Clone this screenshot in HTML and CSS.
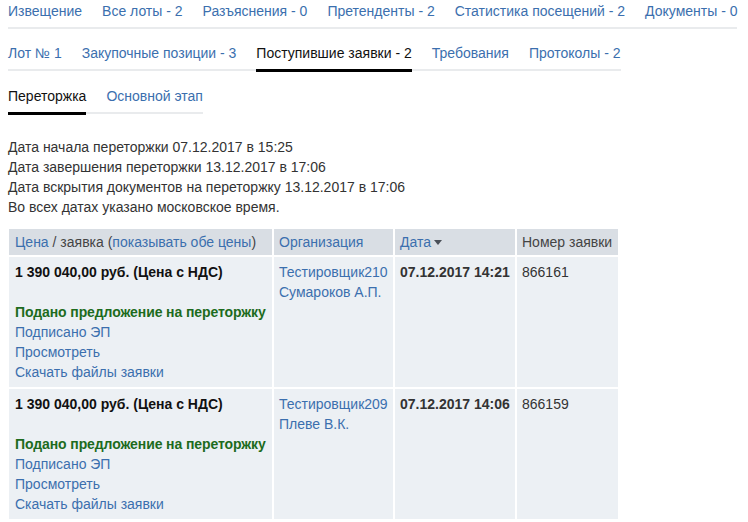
FILE: index.html
```html
<!DOCTYPE html>
<html lang="ru">
<head>
    <meta charset="UTF-8">
    <title>Поступившие заявки</title>
    <link rel="stylesheet" href="styles.css">
</head>
<body>
    <div class="page">
        <ul class="tabs">
            <li><a href="#">Извещение</a></li>
            <li><a href="#">Все лоты - 2</a></li>
            <li><a href="#">Разъяснения - 0</a></li>
            <li><a href="#">Претенденты - 2</a></li>
            <li><a href="#">Статистика посещений - 2</a></li>
            <li><a href="#">Документы - 0</a></li>
        </ul>

        <ul class="tabs tabs-lot">
            <li><a href="#">Лот № 1</a></li>
            <li><a href="#">Закупочные позиции - 3</a></li>
            <li class="active"><span>Поступившие заявки - 2</span></li>
            <li><a href="#">Требования</a></li>
            <li><a href="#">Протоколы - 2</a></li>
        </ul>

        <ul class="tabs">
            <li class="active"><span>Переторжка</span></li>
            <li><a href="#">Основной этап</a></li>
        </ul>

        <div class="dates">
            <p>Дата начала переторжки 07.12.2017 в 15:25</p>
            <p>Дата завершения переторжки 13.12.2017 в 17:06</p>
            <p>Дата вскрытия документов на переторжку 13.12.2017 в 17:06</p>
            <p>Во всех датах указано московское время.</p>
        </div>

        <table class="bids">
            <colgroup>
                <col class="col-price">
                <col class="col-org">
                <col class="col-date">
                <col class="col-num">
            </colgroup>
            <tr>
                <th><a href="#">Цена</a> / заявка (<a href="#">показывать обе цены</a>)</th>
                <th><a href="#">Организация</a></th>
                <th><a href="#">Дата</a><span class="sort"></span></th>
                <th>Номер заявки</th>
            </tr>
            <tr>
                <td>
                    <div class="price">1 390 040,00 руб. (Цена с НДС)</div>
                    <div class="blank"></div>
                    <div class="status">Подано предложение на переторжку</div>
                    <a href="#">Подписано ЭП</a>
                    <a href="#">Просмотреть</a>
                    <a href="#">Скачать файлы заявки</a>
                </td>
                <td><a href="#">Тестировщик210 Сумароков А.П.</a></td>
                <td class="date">07.12.2017 14:21</td>
                <td>866161</td>
            </tr>
            <tr>
                <td>
                    <div class="price">1 390 040,00 руб. (Цена с НДС)</div>
                    <div class="blank"></div>
                    <div class="status">Подано предложение на переторжку</div>
                    <a href="#">Подписано ЭП</a>
                    <a href="#">Просмотреть</a>
                    <a href="#">Скачать файлы заявки</a>
                </td>
                <td><a href="#">Тестировщик209 Плеве В.К.</a></td>
                <td class="date">07.12.2017 14:06</td>
                <td>866159</td>
            </tr>
        </table>
    </div>
</body>
</html>
```

FILE: styles.css
```css
body {
    margin: 0;
    padding: 0;
    font-family: "Liberation Sans", Arial, sans-serif;
    font-size: 14px;
    line-height: 20px;
    color: #333;
    background-color: #fff;
}
a {
    color: #3b6fae;
    text-decoration: none;
}
.page {
    padding: 1px 8px 0 8px;
}
.tabs {
    display: flex;
    width: max-content;
    gap: 20px;
    list-style: none;
    margin: 0 0 14px 0;
    padding: 0;
    border-bottom: 2px solid #e9ebed;
}
.tabs-lot {
    margin-bottom: 15px;
}
.tabs li {
    padding-bottom: 6px;
    margin-bottom: -2px;
    border-bottom: 2px solid transparent;
}
.tabs li.active {
    color: #111;
    border-bottom: 3px solid #000;
    margin-bottom: -3px;
}
.dates {
    margin-top: 23px;
}
.dates p {
    margin: 0;
}
.bids {
    width: 613px;
    margin-top: 10px;
    margin-left: -1px;
    border-collapse: separate;
    border-spacing: 2px;
    table-layout: fixed;
}
.col-price { width: 263px; }
.col-org { width: 119px; }
.col-date { width: 120px; }
.col-num { width: 101px; }
.bids th {
    background-color: #d9dee4;
    font-weight: normal;
    text-align: left;
    color: #444;
    padding: 3px 6px 3px 5px;
    white-space: nowrap;
    overflow: hidden;
}
.bids td {
    background-color: #ecf0f4;
    vertical-align: top;
    padding: 5px 6px 5px 5px;
    color: #333;
}
.bids td:first-child,
.bids th:first-child {
    padding-left: 6px;
}
.bids td a {
    display: block;
}
.sort {
    display: inline-block;
    width: 0;
    height: 0;
    margin-left: 3px;
    vertical-align: 2px;
    border-left: 4px solid transparent;
    border-right: 4px solid transparent;
    border-top: 5px solid #4a5058;
}
.price {
    font-weight: bold;
    color: #111;
    white-space: nowrap;
}
.blank {
    height: 20px;
}
.status {
    font-weight: bold;
    color: #1d6b1d;
    white-space: nowrap;
    letter-spacing: -0.1px;
}
.date {
    font-weight: bold;
    color: #111;
    white-space: nowrap;
}
```
